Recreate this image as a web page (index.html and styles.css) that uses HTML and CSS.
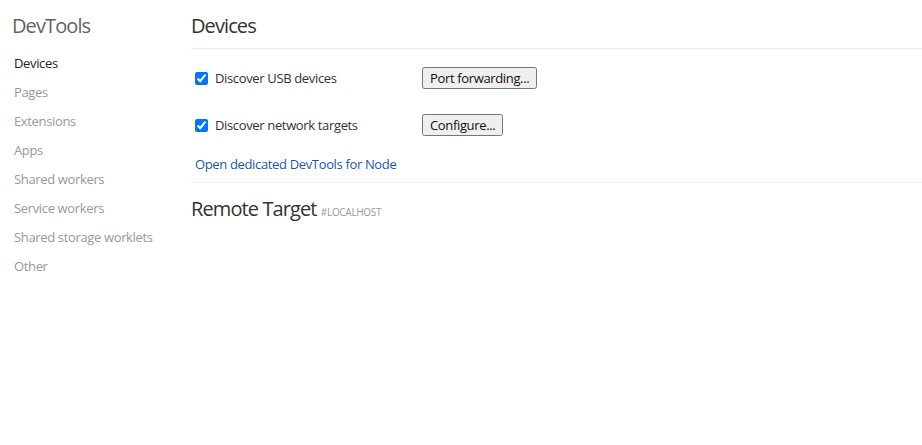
FILE: index.html
```html
<!DOCTYPE html>
<html>
<head>
<meta charset="utf-8">
<link rel="stylesheet" href="styles.css">
</head>
<body>
<div class="page">
  <nav class="sidebar">
    <div class="brand">DevTools</div>
    <ul class="nav-list">
      <li class="nav-item selected">Devices</li>
      <li class="nav-item">Pages</li>
      <li class="nav-item">Extensions</li>
      <li class="nav-item">Apps</li>
      <li class="nav-item">Shared workers</li>
      <li class="nav-item">Service workers</li>
      <li class="nav-item">Shared storage worklets</li>
      <li class="nav-item">Other</li>
    </ul>
  </nav>
  <main class="content">
    <header class="content-header">
      <h1 class="title">Devices</h1>
    </header>
    <section class="options">
      <div class="option-row">
        <label class="option-label"><input type="checkbox" class="check" checked>Discover USB devices</label>
        <button class="btn">Port forwarding...</button>
      </div>
      <div class="option-row">
        <label class="option-label"><input type="checkbox" class="check" checked>Discover network targets</label>
        <button class="btn">Configure...</button>
      </div>
      <a class="node-link" href="#">Open dedicated DevTools for Node</a>
    </section>
    <section class="remote">
      <h2 class="remote-title">Remote Target <span class="remote-sub">#LOCALHOST</span></h2>
    </section>
  </main>
</div>
</body>
</html>
```

FILE: styles.css
```css
html, body {
  margin: 0;
  padding: 0;
  background: #fff;
}
body {
  font-family: "Open Sans", "Noto Sans", sans-serif;
  font-size: 13px;
  letter-spacing: -0.35px;
  color: #303942;
}
.page {
  display: flex;
  min-height: 445px;
}
.sidebar {
  width: 191px;
  flex: none;
}
.brand {
  font-size: 20px;
  line-height: 24px;
  letter-spacing: -0.9px;
  color: #5f6368;
  padding: 14px 0 0 12px;
}
.nav-list {
  list-style: none;
  margin: 11px 0 0 0;
  padding: 0;
}
.nav-item {
  padding-left: 14px;
  height: 29px;
  line-height: 29px;
  color: #999;
}
.nav-item.selected {
  color: #222;
}
.content {
  flex: 1;
  min-width: 0;
}
.content-header {
  border-bottom: 1px solid #eee;
  padding-top: 14px;
  height: 34px;
}
.title {
  margin: 0;
  font-size: 20px;
  line-height: 24px;
  letter-spacing: -0.9px;
  font-weight: normal;
  color: #333;
}
.options {
  padding-top: 18px;
  border-bottom: 1px solid #eee;
  padding-bottom: 9px;
}
.option-row {
  display: grid;
  grid-template-columns: 231px auto;
  align-items: center;
  height: 22px;
  margin-bottom: 25px;
  justify-content: start;
}
.option-label {
  display: flex;
  align-items: center;
  color: #333;
}
.check {
  width: 13px;
  height: 13px;
  margin: 0 7px 0 4px;
}
.btn {
  font-family: inherit;
  font-size: 13px;
  letter-spacing: -0.35px;
  height: 22px;
  padding: 0 6px;
  color: #111;
  justify-self: start;
}
.node-link {
  display: block;
  margin: -6px 0 0 4px;
  line-height: 18px;
  color: #1b55b3;
  text-decoration: none;
}
.remote {
  padding-top: 14px;
}
.remote-title {
  margin: 0;
  font-size: 20px;
  line-height: 24px;
  letter-spacing: -0.9px;
  font-weight: normal;
  color: #333;
}
.remote-sub {
  font-size: 10px;
  letter-spacing: -0.3px;
  color: #999;
}
```
